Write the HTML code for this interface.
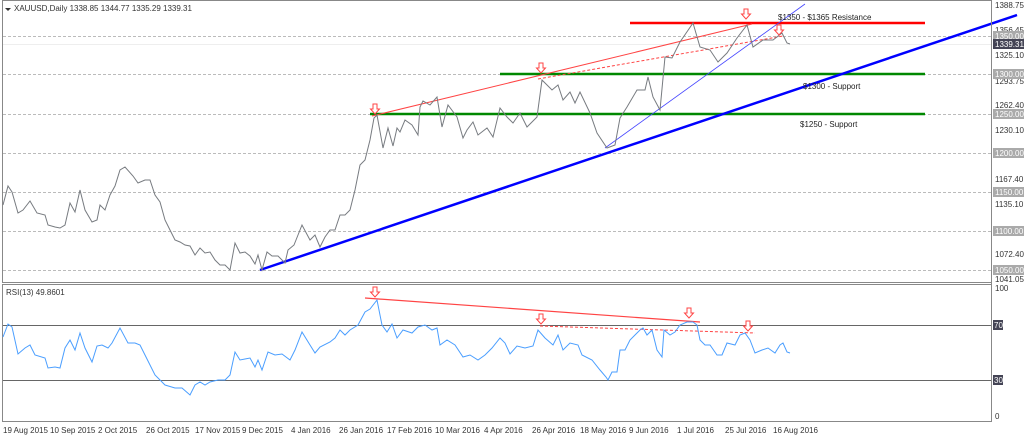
<!DOCTYPE html>
<html><head><style>
body{margin:0;background:#fff;width:1024px;height:438px;overflow:hidden;font-family:"Liberation Sans",sans-serif}
svg text{font-family:"Liberation Sans",sans-serif;font-size:8px}
</style></head><body>
<svg width="1024" height="438" xmlns="http://www.w3.org/2000/svg">
<rect x="0" y="0" width="1024" height="438" fill="#fff"/>
<g stroke="#bbb" stroke-dasharray="3,2" stroke-width="1">
<line x1="3" x2="991" y1="36.5" y2="36.5"/><line x1="3" x2="991" y1="74.5" y2="74.5"/>
<line x1="3" x2="991" y1="114.5" y2="114.5"/><line x1="3" x2="991" y1="153.5" y2="153.5"/>
<line x1="3" x2="991" y1="192.5" y2="192.5"/><line x1="3" x2="991" y1="231.5" y2="231.5"/>
<line x1="3" x2="991" y1="270.5" y2="270.5"/>
</g>
<line x1="3" x2="991" y1="44.5" y2="44.5" stroke="#eee"/>
<!-- frames -->
<rect x="2.5" y="0.5" width="989" height="282" fill="none" stroke="#888"/>
<rect x="2.5" y="284.5" width="989" height="137" fill="none" stroke="#888"/>
<line x1="3" x2="991" y1="325.5" y2="325.5" stroke="#666"/>
<line x1="3" x2="991" y1="380.5" y2="380.5" stroke="#666"/>
<!-- drawings -->
<line x1="630" y1="23" x2="925" y2="23" stroke="#f00" stroke-width="2.5"/>
<line x1="500" y1="74" x2="925" y2="74" stroke="#080" stroke-width="2.5"/>
<line x1="370" y1="114" x2="925" y2="114" stroke="#080" stroke-width="2.5"/>
<line x1="372" y1="116" x2="752" y2="24" stroke="#f44" stroke-width="1"/>
<line x1="538" y1="79" x2="783" y2="36" stroke="#f44" stroke-width="1" stroke-dasharray="3,2"/>
<line x1="605" y1="148" x2="805" y2="4" stroke="#44f" stroke-width="0.8"/>
<line x1="260" y1="270" x2="1017" y2="15" stroke="#00f" stroke-width="2.5"/>
<polyline fill="none" stroke="#777b80" stroke-width="1" points="3,205 8,186 12,192 18,213 23,210 30,201 37,213 45,215 48,225 55,227 60,228 65,225 70,203 75,212 80,190 85,210 92,222 97,220 100,205 105,210 110,195 115,186 120,170 125,167 133,176 138,183 145,180 150,180 155,195 160,202 165,220 170,230 175,240 180,242 185,245 190,246 195,255 200,248 205,253 210,252 215,260 220,265 225,265 230,270 235,243 240,253 245,252 250,256 255,264 258,255 262,270 267,252 272,256 278,256 285,263 288,250 294,245 302,225 310,240 315,235 320,247 325,237 330,230 335,230 340,215 345,215 350,210 355,190 360,165 365,160 370,140 374,118 377,115 383,148 388,128 393,146 397,128 400,132 405,120 412,125 418,135 420,107 423,101 430,105 437,97 442,127 448,105 457,117 463,138 467,130 473,122 478,135 487,128 493,137 500,108 507,117 513,123 520,113 527,127 537,117 542,80 552,90 558,85 563,100 570,92 575,103 580,92 590,113 597,133 607,148 615,145 620,118 627,107 637,90 645,90 648,77 653,97 660,110 665,57 672,58 680,42 693,23 700,47 710,50 718,62 727,53 737,38 747,25 753,47 763,40 773,40 782,33 787,43 790,44"/>
<!-- RSI -->
<line x1="365" y1="298" x2="700" y2="322" stroke="#f44" stroke-width="1.2"/>
<line x1="540" y1="326" x2="755" y2="333" stroke="#f44" stroke-width="1" stroke-dasharray="3,2"/>
<polyline fill="none" stroke="#4a9eff" stroke-width="1" points="3,337 8,324 12,327 18,354 25,348 30,345 35,355 45,358 48,368 55,367 60,368 65,348 70,340 75,350 80,333 85,348 92,362 97,346 102,345 108,348 112,343 120,328 128,343 135,343 140,345 145,355 155,375 165,385 175,388 182,388 190,395 195,385 200,382 205,385 210,382 218,380 225,380 230,375 235,352 240,360 245,359 250,358 255,367 258,360 262,370 268,352 275,355 282,354 290,360 295,350 302,332 310,345 315,353 320,347 330,342 335,338 340,330 345,335 350,330 358,325 365,312 370,309 377,300 382,325 387,332 392,324 397,338 403,330 412,333 418,327 425,325 432,330 437,328 440,345 447,340 455,345 463,357 470,355 478,360 485,355 492,348 500,338 505,343 510,354 517,346 525,348 533,346 538,330 545,338 553,345 558,335 563,350 570,343 578,345 582,355 592,360 600,370 606,377 608,380 612,372 617,372 620,350 625,350 630,340 635,335 640,330 643,328 647,335 652,330 657,350 662,357 664,330 670,335 675,332 680,325 687,322 693,322 697,325 700,340 705,345 710,345 717,355 722,355 727,343 735,345 740,335 745,333 750,340 755,353 762,350 768,348 775,353 780,345 783,343 787,352 790,353"/>
<!-- arrows -->
<g fill="#fff" stroke="#f44" stroke-width="1">
<path d="M373,104h4v5h2.5l-4.5,5l-4.5,-5h2.5z"/>
<path d="M539,63h4v5h2.5l-4.5,5l-4.5,-5h2.5z"/>
<path d="M744,9h4v5h2.5l-4.5,5l-4.5,-5h2.5z"/>
<path d="M777,25h4v5h2.5l-4.5,5l-4.5,-5h2.5z"/>
<path d="M373,287h4v5h2.5l-4.5,5l-4.5,-5h2.5z"/>
<path d="M539,314h4v5h2.5l-4.5,5l-4.5,-5h2.5z"/>
<path d="M687,308h4v5h2.5l-4.5,5l-4.5,-5h2.5z"/>
<path d="M746,321h4v5h2.5l-4.5,5l-4.5,-5h2.5z"/>
</g>
<text x="778" y="20" fill="#222">$1350 - $1365 Resistance</text>
<text x="803" y="89" fill="#222">$1300 - Support</text>
<text x="800" y="127" fill="#222">$1250 - Support</text>
<path d="M5,8h6l-3,3z" fill="#333"/>
<text x="14" y="11" fill="#333">XAUUSD,Daily  1338.85 1344.77 1335.29 1339.31</text>
<text x="6" y="295" fill="#333">RSI(13) 49.8601</text>
<!-- axis -->
<line x1="991.5" y1="0" x2="991.5" y2="422" stroke="#888"/>
<g fill="#333">
<text x="995" y="8">1388.75</text><text x="995" y="33">1356.45</text>
<text x="995" y="58">1325.10</text><text x="995" y="84">1293.75</text>
<text x="995" y="108">1262.40</text><text x="995" y="133">1230.10</text>
<text x="995" y="182">1167.40</text><text x="995" y="207">1135.10</text>
<text x="995" y="257">1072.40</text><text x="995" y="282">1041.05</text>
<text x="995" y="291">100</text><text x="995" y="419">0</text>
</g>
<g font-size="8">
<rect x="993" y="31" width="31" height="10" fill="#aaa"/><text x="995" y="39" fill="#fff">1350.00</text>
<rect x="993" y="39" width="31" height="10" fill="#445"/><text x="995" y="47" fill="#fff">1339.31</text>
<rect x="993" y="69" width="31" height="10" fill="#aaa"/><text x="995" y="77" fill="#fff">1300.00</text>
<rect x="993" y="109" width="31" height="10" fill="#aaa"/><text x="995" y="117" fill="#fff">1250.00</text>
<rect x="993" y="148" width="31" height="10" fill="#aaa"/><text x="995" y="156" fill="#fff">1200.00</text>
<rect x="993" y="187" width="31" height="10" fill="#aaa"/><text x="995" y="195" fill="#fff">1150.00</text>
<rect x="993" y="226" width="31" height="10" fill="#aaa"/><text x="995" y="234" fill="#fff">1100.00</text>
<rect x="993" y="265" width="31" height="10" fill="#aaa"/><text x="995" y="273" fill="#fff">1050.00</text>
<rect x="993" y="320" width="10" height="10" fill="#445"/><text x="994" y="328" fill="#fff">70</text>
<rect x="993" y="375" width="10" height="10" fill="#445"/><text x="994" y="383" fill="#fff">30</text>
</g>
<g fill="#333">
<text x="3" y="433">19 Aug 2015</text><text x="50" y="433">10 Sep 2015</text>
<text x="98" y="433">2 Oct 2015</text><text x="146" y="433">26 Oct 2015</text>
<text x="195" y="433">17 Nov 2015</text><text x="242" y="433">9 Dec 2015</text>
<text x="291" y="433">4 Jan 2016</text><text x="339" y="433">26 Jan 2016</text>
<text x="387" y="433">17 Feb 2016</text><text x="435" y="433">10 Mar 2016</text>
<text x="484" y="433">4 Apr 2016</text><text x="532" y="433">26 Apr 2016</text>
<text x="580" y="433">18 May 2016</text><text x="629" y="433">9 Jun 2016</text>
<text x="677" y="433">1 Jul 2016</text><text x="725" y="433">25 Jul 2016</text>
<text x="773" y="433">16 Aug 2016</text>
</g>
</svg>
</body></html>
